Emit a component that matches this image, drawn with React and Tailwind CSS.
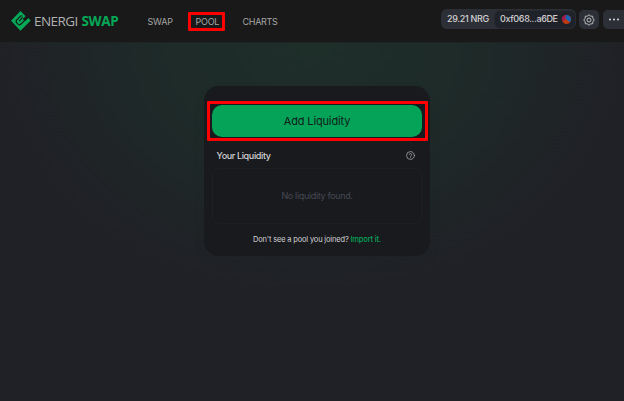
import React from "react";

function Highlight({ className }) {
  return <span className={`pointer-events-none absolute rounded-[1px] border-[3px] border-[#fe0000] ${className}`} />;
}

function Logo() {
  return (
    <div className="flex items-center">
      <svg width="20" height="20" viewBox="0 0 20 20" fill="none">
        <path d="M9.5 0 14.6 5.2 11.8 8 14 10.2 17.2 7 19.7 9.5 9.5 19.7 0 9.8Z" fill="#05a857" />
        <path
          d="M11.6 5 9.6 5 5.8 8.8Q4.4 10.6 6 12.2L7.2 13.4Q8.6 14.4 10 13L16.2 6.8M11.7 6.4 8.3 10.2"
          stroke="#191919"
          strokeWidth="1.1"
        />
      </svg>
      <div className="ml-[3px] flex gap-[2px] whitespace-nowrap font-['Open_Sans',sans-serif] text-[13.5px] leading-5">
        <span className="w-[45.5px] font-normal tracking-[-0.55px] text-[#b0b0b0]">ENERGI</span>
        <span className="font-bold tracking-[-0.35px] text-[#05a857]">SWAP</span>
      </div>
    </div>
  );
}

function Header() {
  return (
    <header className="flex h-[43px] border-b border-[#1b2524] bg-[#191919]">
      <div className="ml-[11px] mt-[11px] h-5 w-[136.5px]">
        <Logo />
      </div>
      <nav className="mt-[15px] flex h-3 text-[9px] leading-[13px] text-[#a5a5a5]">
        <a className="w-12 tracking-[-0.2px]">SWAP</a>
        <a className="relative w-[47px] tracking-[-0.25px]">
          POOL
          <Highlight className="-left-[7.5px] -top-[3px] h-[19px] w-[37px]" />
        </a>
        <a className="tracking-[-0.3px]">CHARTS</a>
      </nav>
      <div className="ml-auto flex items-start pt-[9px]">
        <div className="flex h-5 w-[135px] items-center rounded-[6px] bg-[#2c2f36] text-[9px] leading-3 text-[#d0d0d2]">
          <span className="w-[53px] whitespace-nowrap pl-[6px] font-medium tracking-[-0.3px]">29.21 NRG</span>
          <span className="flex h-[19px] flex-1 items-center rounded-[6px] border border-[#292b32] bg-[#202229] pl-[5px]">
            <span className="w-[52px] whitespace-nowrap font-medium tracking-[-0.35px]">0xf068...a6DE</span>
            <svg className="ml-auto mr-[4.5px] shrink-0" width="9" height="9" viewBox="0 0 9 9">
              <circle cx="4.5" cy="4.5" r="4.5" fill="#bd3b13" />
              <path d="M4 0A4.5 4.5 0 0 0 .2 6L3 5.5Z" fill="#a51a4c" />
              <path d="M4 0A4.5 4.5 0 0 1 8 7.2L3.4 3.5Z" fill="#1762b5" />
            </svg>
          </span>
        </div>
        <button className="ml-[3px] mt-px flex h-[19px] w-5 items-center justify-center rounded-[5px] bg-[#2c2f36]">
          <svg width="12" height="12" viewBox="0 0 24 24" fill="none" stroke="#bfc0c3" strokeWidth="2">
            <path d="M12 1.5 15 4l4.4.6L20 9l2.5 3-2.5 3-.6 4.4L15 20l-3 2.5L9 20l-4.4-.6L4 15l-2.5-3L4 9l.6-4.4L9 4Z" />
            <circle cx="12" cy="12" r="4" />
          </svg>
        </button>
        <button className="ml-1 mt-px flex h-[19px] w-[21px] items-center justify-center rounded-l-[5px] bg-[#2c2f36]">
          <svg width="12" height="3" viewBox="0 0 12 3" fill="#cdced0">
            <circle cx="2" cy="1.5" r="1.1" />
            <circle cx="6" cy="1.5" r="1.1" />
            <circle cx="10" cy="1.5" r="1.1" />
          </svg>
        </button>
      </div>
    </header>
  );
}

function PoolCard() {
  return (
    <section className="ml-[204px] mt-[43px] h-[170px] w-[226px] rounded-[15px] bg-[#191a1e] px-2 pt-[19px] shadow-[0_6px_16px_rgba(0,0,0,0.04)]">
      <div className="relative">
        <button className="block h-8 w-[210px] rounded-[10px] bg-[#05a357] text-[11px] leading-8 tracking-[-0.15px] text-[#10201a]">
          Add Liquidity
        </button>
        <Highlight className="-left-[5px] -top-1 h-10 w-[221px]" />
      </div>
      <div className="mt-[13px] flex h-3 items-center justify-between pl-[4.5px] pr-[7px]">
        <h2 className="text-[9px] font-medium leading-3 tracking-[-0.35px] text-[#d2d2d4]">Your Liquidity</h2>
        <svg className="-mt-px" width="9" height="9" viewBox="0 0 24 24" fill="none" stroke="#a1a2a5" strokeWidth="2.2" strokeLinecap="round">
          <circle cx="12" cy="12" r="10.5" />
          <path d="M8.7 9a3.4 3.4 0 0 1 6.6 1c0 2.2-3.3 2.6-3.3 4.5M12 17.7v.1" />
        </svg>
      </div>
      <div className="mt-[6px] flex h-[56px] w-[210px] items-center justify-center rounded-[8px] border border-[#1e1f24] text-[9px] tracking-[-0.34px] text-[#454854]">
        No liquidity found.
      </div>
      <p className="mt-[10px] whitespace-nowrap text-center text-[7.5px] leading-3 tracking-[-0.17px] text-[#d2d2d4]">
        Don't see a pool you joined? <a className="font-medium text-[#05a357]">Import it.</a>
      </p>
    </section>
  );
}

export default function App() {
  return (
    <div className="h-[401px] w-[624px] overflow-hidden bg-[#202126] font-['Inter',sans-serif]">
      <Header />
      <main className="flex h-[358px] items-start bg-[radial-gradient(ellipse_312px_250px_at_312px_0px,#1e2e29_0%,#1e2b29_45%,#202126_100%)]">
        <PoolCard />
      </main>
    </div>
  );
}
